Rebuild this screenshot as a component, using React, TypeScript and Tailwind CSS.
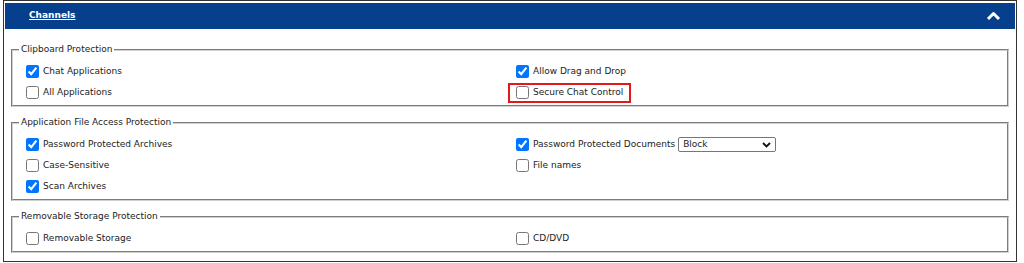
import React from "react";

type Item = { label: string; checked?: boolean; boxed?: boolean; select?: string } | null;

const groups: { title: string; rows: [Item, Item][] }[] = [
  {
    title: "Clipboard Protection",
    rows: [
      [{ label: "Chat Applications", checked: true }, { label: "Allow Drag and Drop", checked: true }],
      [{ label: "All Applications" }, { label: "Secure Chat Control", boxed: true }],
    ],
  },
  {
    title: "Application File Access Protection",
    rows: [
      [
        { label: "Password Protected Archives", checked: true },
        { label: "Password Protected Documents", checked: true, select: "Block" },
      ],
      [{ label: "Case-Sensitive" }, { label: "File names" }],
      [{ label: "Scan Archives", checked: true }, null],
    ],
  },
  {
    title: "Removable Storage Protection",
    rows: [[{ label: "Removable Storage" }, { label: "CD/DVD" }]],
  },
];

const Option = ({ item }: { item: Item }) => {
  if (!item) return <div className="h-[21px]" />;
  const inner = (
    <>
      <input type="checkbox" defaultChecked={item.checked} className="m-0 w-[13px] h-[13px] accent-[#0075ff]" />
      <span>{item.label}</span>
      {item.select && (
        <div className="ml-[-1px] w-[98px] h-[15px] border border-[#767676] rounded-[2px] flex items-center justify-between pl-[4px] pr-[4px] bg-white">
          <span>{item.select}</span>
          <svg width="9" height="6" viewBox="0 0 9 6">
            <path d="M1 1l3.5 3.5L8 1" fill="none" stroke="#111" strokeWidth="1.8" />
          </svg>
        </div>
      )}
    </>
  );
  return (
    <div className="h-[21px] flex items-center">
      {item.boxed ? (
        <span className="h-[20px] -ml-[8px] pl-[6px] pr-[6px] border-2 border-[#e4171b] flex items-center gap-[4px]">
          {inner}
        </span>
      ) : (
        <div className="flex items-center gap-[4px]">{inner}</div>
      )}
    </div>
  );
};

export default function App() {
  return (
    <div className="w-[1024px] h-[263px] bg-white font-['DejaVu_Sans',sans-serif] text-[9px] text-[#222]">
      <div className="ml-[3px] w-[1014px] h-[262px] border border-[#333] px-px pt-[2px] flex flex-col">
        <div className="h-[26px] bg-[#063f8c] flex items-center justify-between pl-[24px] pr-[14px]">
          <span className="text-white font-bold underline">Channels</span>
          <svg width="15" height="10" viewBox="0 0 15 10">
            <path d="M2 8l5.5-5.5L13 8" fill="none" stroke="#fff" strokeWidth="3" strokeLinejoin="round" />
          </svg>
        </div>

        {groups.map((g, gi) => (
          <fieldset
            key={g.title}
            className={`mx-[6px] p-0 border-2 [border-style:groove] border-[#d0d0d0] ${gi === 0 ? "mt-[14px]" : "mt-[9px]"}`}
          >
            <legend className="ml-[6px] px-[2px] leading-[13px]">{g.title}</legend>
            <div className="grid grid-cols-[490px_1fr] pl-[13px] pt-[5px] pb-[2px]">
              {g.rows.map((r, ri) => (
                <React.Fragment key={ri}>
                  <Option item={r[0]} />
                  <Option item={r[1]} />
                </React.Fragment>
              ))}
            </div>
          </fieldset>
        ))}
      </div>
    </div>
  );
}
